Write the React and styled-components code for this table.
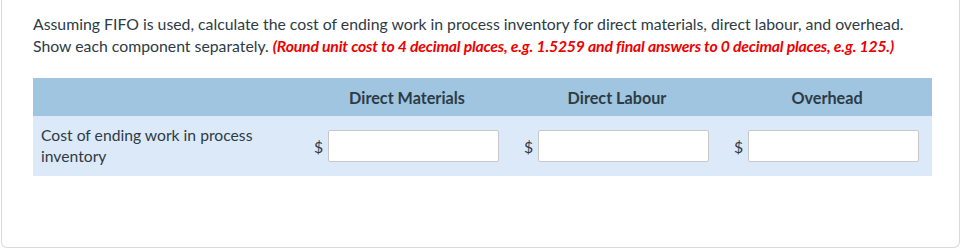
import styled, { createGlobalStyle } from 'styled-components';

const GlobalStyle = createGlobalStyle`
  html, body {
    margin: 0;
    padding: 0;
    background: #fff;
  }
  body {
    font-family: 'Lato', 'Open Sans', sans-serif;
    color: #2d3b45;
  }
`;

const Card = styled.div`
  box-sizing: border-box;
  margin: 0 1px;
  height: 248px;
  padding: 13px 31px 0;
  border: 1px solid #dadada;
  border-top: none;
  border-radius: 0 0 6px 6px;
`;

const Prompt = styled.p`
  margin: 0;
  font-size: 15.8px;
  line-height: 22px;
  color: #2d3b45;
`;

const Hint = styled.span`
  color: #ee0000;
  font-weight: 700;
  font-style: italic;
  letter-spacing: -0.2px;
`;

const Table = styled.div`
  margin-top: 21px;
  width: 899px;
  display: grid;
  grid-template-columns: 269px 210px 210px 210px;
`;

const HeadCell = styled.div`
  height: 38px;
  background: #9fc5e0;
  display: flex;
  align-items: center;
  justify-content: center;
  font-size: 16.2px;
  font-weight: 700;
  color: #2d3b45;
`;

const LabelCell = styled.div`
  height: 60px;
  box-sizing: border-box;
  padding: 0 16px 0 8px;
  background: #dce9f8;
  display: flex;
  align-items: center;
  font-size: 15.7px;
  line-height: 21.5px;
  color: #2d3b45;
`;

const InputCell = styled.div`
  height: 60px;
  box-sizing: border-box;
  padding: 0 13px 0 12px;
  background: #dce9f8;
  display: flex;
  align-items: center;
  gap: 7px;
`;

const Dollar = styled.span`
  width: 7px;
  font-size: 15.8px;
  color: #2d3b45;
`;

const AmountInput = styled.input`
  box-sizing: border-box;
  width: 171px;
  height: 32px;
  margin: 0;
  padding: 4px 6px;
  border: 1px solid #c8c8c8;
  border-radius: 2px;
  background: #fff;
  font-family: inherit;
  font-size: 15px;
  outline: none;
`;

const columns = ['Direct Materials', 'Direct Labour', 'Overhead'];

export default function App() {
  return (
    <>
      <GlobalStyle />
      <Card>
        <Prompt>
          Assuming FIFO is used, calculate the cost of ending work in process inventory for direct materials, direct labour, and overhead.
          <br />
          Show each component separately. <Hint>(Round unit cost to 4 decimal places, e.g. 1.5259 and final answers to 0 decimal places, e.g. 125.)</Hint>
        </Prompt>
        <Table>
          <HeadCell />
          {columns.map((c) => (
            <HeadCell key={c}>{c}</HeadCell>
          ))}
          <LabelCell>Cost of ending work in process inventory</LabelCell>
          {columns.map((c) => (
            <InputCell key={c}>
              <Dollar>$</Dollar>
              <AmountInput type="text" aria-label={c} />
            </InputCell>
          ))}
        </Table>
      </Card>
    </>
  );
}
